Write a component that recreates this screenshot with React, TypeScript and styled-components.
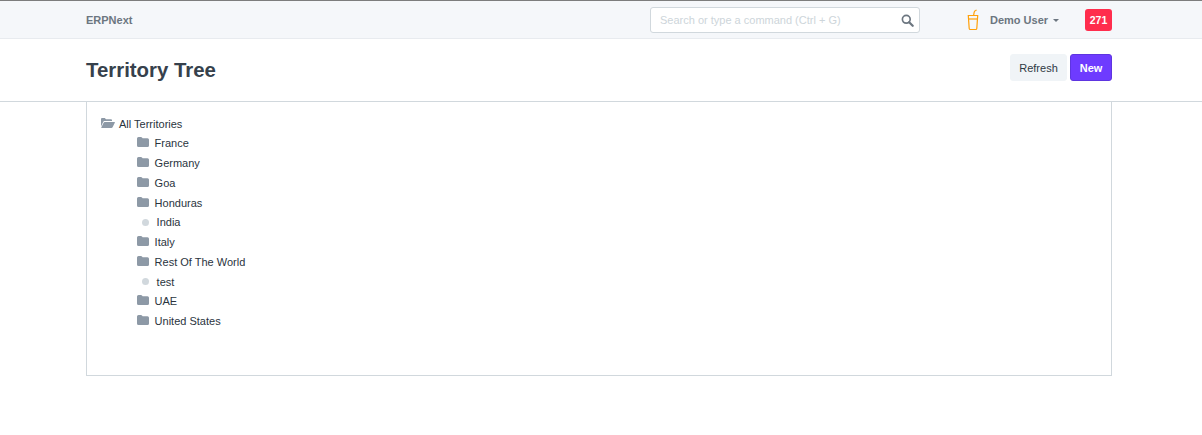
import React from "react";
import styled, { createGlobalStyle } from "styled-components";

interface Territory {
  name: string;
  leaf?: boolean;
}

const territories: Territory[] = [
  { name: "France" },
  { name: "Germany" },
  { name: "Goa" },
  { name: "Honduras" },
  { name: "India", leaf: true },
  { name: "Italy" },
  { name: "Rest Of The World" },
  { name: "test", leaf: true },
  { name: "UAE" },
  { name: "United States" },
];

const GlobalStyle = createGlobalStyle`
  html, body {
    margin: 0;
    padding: 0;
    background: #fff;
    font-family: "Liberation Sans", Arial, sans-serif;
    color: #36414c;
  }
`;

const Navbar = styled.div`
  height: 37px;
  background: #f5f7fa;
  border-top: 1px solid #7d7d7d;
  border-bottom: 1px solid #e8ebef;
  padding-left: 86px;
  display: flex;
`;

const Container = styled.div`
  width: 1026px;
  display: flex;
  align-items: center;
`;

const Brand = styled.div`
  font-size: 11px;
  font-weight: bold;
  color: #6c7680;
`;

const SearchBox = styled.div`
  margin-left: auto;
  margin-top: 1px;
  width: 270px;
  height: 26px;
  box-sizing: border-box;
  background: #fff;
  border: 1px solid #d1d8dd;
  border-radius: 3px;
  display: flex;
  align-items: center;
  justify-content: space-between;
  padding: 0 5px 0 9px;
`;

const Placeholder = styled.span`
  font-size: 11px;
  color: #cdd5da;
`;

const UserMenu = styled.div`
  margin-left: 46px;
  display: flex;
  align-items: center;
  width: 119px;
  font-size: 11px;
  font-weight: bold;
  color: #6c7680;
`;

const UserName = styled.span`
  margin-left: 10px;
`;

const Caret = styled.span`
  margin-left: 5px;
  margin-top: 1px;
  border-top: 3px solid #6c7680;
  border-left: 3px solid transparent;
  border-right: 3px solid transparent;
`;

const Badge = styled.div`
  width: 27px;
  height: 22px;
  margin-top: 1px;
  border-radius: 3px;
  background: #ff2d4d;
  color: #fff;
  font-size: 10.5px;
  font-weight: bold;
  display: flex;
  align-items: center;
  justify-content: center;
`;

const PageHead = styled.div`
  height: 62px;
  border-bottom: 1px solid #d1d8dd;
  padding-left: 86px;
  display: flex;
`;

const Title = styled.h1`
  margin: 1px 0 0;
  font-size: 20.4px;
  font-weight: bold;
  color: #36414c;
`;

const Actions = styled.div`
  margin-left: auto;
  display: flex;
  gap: 3px;
  margin-top: -5px;
`;

const Button = styled.button<{ $primary?: boolean }>`
  height: 27px;
  box-sizing: border-box;
  padding: 0;
  width: ${(p) => (p.$primary ? "42px" : "57px")};
  border-radius: 3px;
  border: 1px solid ${(p) => (p.$primary ? "#5e35e0" : "#f0f4f7")};
  background: ${(p) => (p.$primary ? "#6e3bff" : "#f0f4f7")};
  color: ${(p) => (p.$primary ? "#fff" : "#2f3943")};
  font-family: inherit;
  font-size: 11px;
  font-weight: ${(p) => (p.$primary ? "bold" : "normal")};
`;

const Panel = styled.div`
  width: 1026px;
  height: 274px;
  box-sizing: border-box;
  margin-left: 86px;
  border: 1px solid #d1d8dd;
  border-top: 0;
  padding: 11.8px 0 0 14px;
`;

const Row = styled.div<{ $indent?: boolean }>`
  height: 19.75px;
  display: flex;
  align-items: center;
  font-size: 11px;
  color: #2a343e;
  padding-left: ${(p) => (p.$indent ? "35.6px" : "0")};
`;

const IconSlot = styled.span<{ $leaf?: boolean }>`
  width: ${(p) => (p.$leaf ? "20px" : "18px")};
  display: flex;
  align-items: center;
  flex-shrink: 0;
  margin-top: -2px;
`;

const LeafDot = styled.span`
  width: 7px;
  height: 7px;
  margin-left: 5px;
  margin-top: 2px;
  border-radius: 50%;
  background: #d1d8dd;
`;

const SearchIcon = () => (
  <svg width="13" height="13" viewBox="0 0 14 14" fill="none" stroke="#6c7680">
    <circle cx="5.7" cy="5.7" r="4.2" strokeWidth="1.8" />
    <path d="M8.8 8.8 L12.6 12.6" strokeWidth="2.4" strokeLinecap="round" />
  </svg>
);

const CupIcon = () => (
  <svg width="14" height="22" viewBox="0 0 14 22" fill="none" stroke="#ffa00a" strokeWidth="1.2">
    <path d="M2.3 6.5 L3.2 19.5 Q3.3 20.5 4.2 20.5 L9.8 20.5 Q10.7 20.5 10.8 19.5 L11.7 6.5 Z" />
    <path d="M2.6 10 H11.4" />
    <path d="M7.6 6.5 L8.2 3.2 Q8.5 2 9.6 1.5 L10.6 1" />
  </svg>
);

const FolderIcon = () => (
  <svg width="12" height="10" viewBox="0 0 12 10" fill="#8d99a6">
    <path d="M1.5 0 H4 Q4.6 0 5 0.5 L5.6 1.3 H10.5 Q12 1.3 12 2.8 V8.5 Q12 10 10.5 10 H1.5 Q0 10 0 8.5 V1.5 Q0 0 1.5 0 Z" />
  </svg>
);

const FolderOpenIcon = () => (
  <svg width="14" height="10" viewBox="0 0 14 10" fill="#8d99a6">
    <path d="M0 8.4 V1 Q0 0 1 0 H3.8 L5 1.2 H10 Q11 1.2 11 2.2 V3 H3.4 Q2.7 3 2.3 3.7 Z" />
    <path d="M3.6 4 H13.4 Q14.2 4 13.8 4.8 L11.6 9.2 Q11.2 10 10.4 10 H0.8 Q0 10 0.4 9.2 L2.6 4.8 Q3 4 3.6 4 Z" />
  </svg>
);

export default function App() {
  return (
    <>
      <GlobalStyle />
      <Navbar>
        <Container>
          <Brand>ERPNext</Brand>
          <SearchBox>
            <Placeholder>Search or type a command (Ctrl + G)</Placeholder>
            <SearchIcon />
          </SearchBox>
          <UserMenu>
            <CupIcon />
            <UserName>Demo User</UserName>
            <Caret />
          </UserMenu>
          <Badge>271</Badge>
        </Container>
      </Navbar>
      <PageHead>
        <Container>
          <Title>Territory Tree</Title>
          <Actions>
            <Button>Refresh</Button>
            <Button $primary>New</Button>
          </Actions>
        </Container>
      </PageHead>
      <Panel>
        <Row>
          <IconSlot>
            <FolderOpenIcon />
          </IconSlot>
          All Territories
        </Row>
        {territories.map((t) => (
          <Row key={t.name} $indent>
            <IconSlot $leaf={t.leaf}>{t.leaf ? <LeafDot /> : <FolderIcon />}</IconSlot>
            {t.name}
          </Row>
        ))}
      </Panel>
    </>
  );
}
